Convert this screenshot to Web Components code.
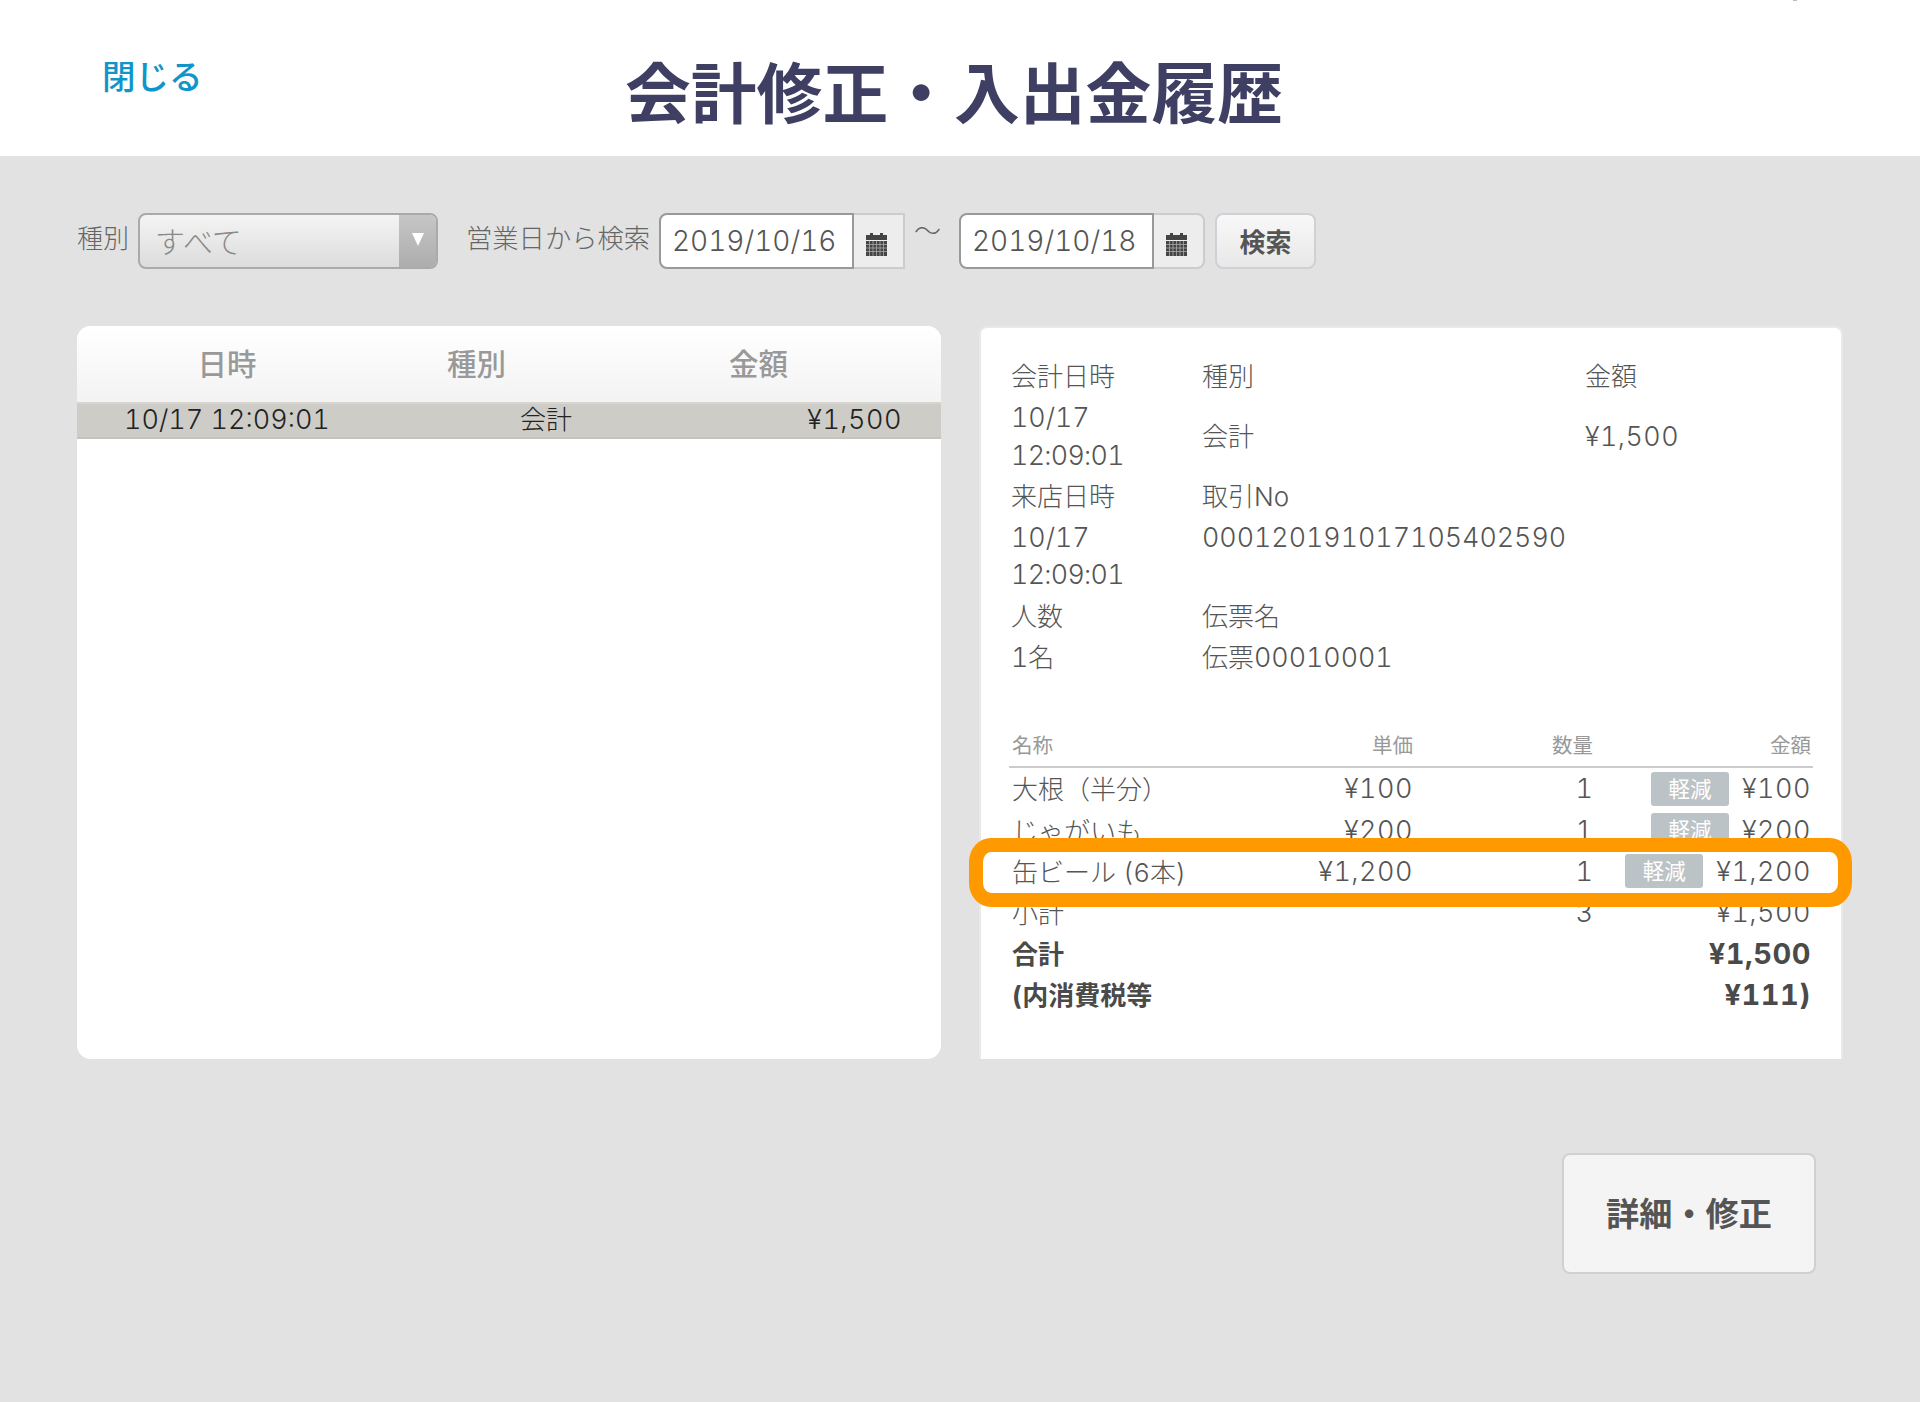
<!DOCTYPE html>
<html lang="ja"><head><meta charset="utf-8"><title>会計修正・入出金履歴</title>
<style>
html,body{margin:0;padding:0;background:#e2e2e2}
body{font-family:Inter,"Noto Sans CJK JP",sans-serif;font-weight:300;color:#555;font-size:26px;width:1920px;min-height:1402px}
</style></head><body>
<app-page></app-page>
<script>
const FONT='font-family:Inter,"Noto Sans CJK JP",sans-serif;font-variant-numeric:tabular-nums;';
function def(name,css,html){
  customElements.define(name,class extends HTMLElement{
    constructor(){super();const r=this.attachShadow({mode:'open'});
      r.innerHTML='<style>:host{'+FONT+'}'+css+'</style>'+(typeof html==='function'?html(this):html);}
  });
}
def('app-header',`
:host{display:grid;position:relative;grid-template-columns:1fr auto 1fr;height:157px;background:#fff;padding:0 114px 0 102px;box-sizing:border-box;border-bottom:1px solid #e4e4e4}
a{color:#0f95c9;font-size:33.5px;font-weight:500;margin-top:54px;line-height:46px;text-decoration:none;justify-self:start}
h1{margin:55px 0 0;font-size:65.8px;line-height:78px;font-weight:700;color:#3e3f63}
i{position:absolute;left:1793px;top:0;width:4px;height:1px;background:#bbb}
`,`<a href="#">閉じる</a><h1>会計修正・入出金履歴</h1><span></span><i></i>`);

def('select-box',`
:host{display:flex;width:300px;height:56px;box-sizing:border-box;border:2px solid #aaa;border-radius:8px;background:linear-gradient(#f4f4f4,#dcdcdc);overflow:hidden}
.v{flex:1;font-size:30px;line-height:54px;color:#8a8a8a;padding-left:15px}
.a{width:37px;background:linear-gradient(#c6c6c6,#adadad);display:flex;justify-content:center;padding-top:18px;box-sizing:border-box}
`,`<div class="v"><slot></slot></div><div class="a"><svg width="14" height="14" viewBox="0 0 14 14"><path d="M1 0H13L7 13Z" fill="#fff"/></svg></div>`);

def('cal-icon',`:host{display:block;width:21px;height:23px}`,
`<svg width="21" height="23" viewBox="0 0 21 23"><rect x="4" y="0" width="3" height="4" fill="#444"/><rect x="14" y="0" width="3" height="4" fill="#444"/><rect x="0" y="2" width="21" height="5" fill="#444"/><rect x="0" y="8" width="21" height="15" fill="#444"/><g stroke="#aaa" stroke-width=".8"><path d="M0 11.5H21M0 15H21M0 18.5H21M3.5 8V23M7 8V23M10.5 8V23M14 8V23M17.5 8V23"/></g></svg>`);

def('date-field',`
:host{display:flex;height:56px}
.i{width:195px;box-sizing:border-box;border:2px solid #999;border-radius:8px 0 0 8px;background:#fff;font-size:28px;line-height:52px;color:#555;padding-left:11px;white-space:nowrap}
.b{width:51px;box-sizing:border-box;background:#ededed;border:2px solid #ccc;border-left:0;display:flex;align-items:center;justify-content:center;padding:2px 4px 0 0}
:host([round]) .b{border-radius:0 8px 8px 0}
`,`<div class="i"><slot></slot></div><div class="b"><cal-icon></cal-icon></div>`);

def('soft-button',`
:host{display:flex;align-items:center;justify-content:center;box-sizing:border-box;border:2px solid #ced2d6;border-radius:8px;background:linear-gradient(#f8f8f8,#e8e8e8);color:#555;font-weight:700;font-size:26px;width:101px;height:56px;padding-bottom:2px}
:host([big]){width:254px;height:121px;background:#f4f4f4;font-size:33.2px;font-weight:700;border-color:#cdd1d5;padding-bottom:5px}
`,`<slot></slot>`);

def('filter-bar',`
:host{display:flex;align-items:center;height:56px;font-size:26px;color:#666;font-weight:300}
.l{line-height:56px;margin-top:-4px;white-space:nowrap}
`,`<span class="l" style="width:61px">種別</span><select-box>すべて</select-box>
<span class="l" style="margin-left:28px;width:193px;font-size:26.3px">営業日から検索</span><date-field>2019/10/16</date-field>
<span class="l" style="margin:-18px 0 0 9px;width:45px;font-size:27px">〜</span><date-field round>2019/10/18</date-field>
<soft-button style="margin-left:10px">検索</soft-button>`);

def('history-list',`
:host{display:block;width:864px;height:733px;background:#fff;border-radius:14px;overflow:hidden}
.h{display:grid;grid-template-columns:300px 199px 365px;height:76px;align-items:center;text-align:center;background:linear-gradient(#fff,#f3f3f3);color:#999;font-size:29.5px;font-weight:500}
.h span{margin-top:-5px}
.r{display:grid;grid-template-columns:302px 334px 228px;height:37px;box-sizing:border-box;background:#cdccc7;border-top:2px solid #d6d5d0;border-bottom:2px solid #c4c3be;align-items:center;color:#222;font-size:27px;line-height:31px}
.r span{margin-top:-2px}
.r span:nth-child(1){padding-left:47px;white-space:nowrap}.r span:nth-child(2){text-align:center;font-size:26px}.r span:nth-child(3){text-align:right;padding-right:39px;letter-spacing:.5px}
`,`<div class="h"><span>日時</span><span>種別</span><span>金額</span></div>
<div class="r"><span>10/17 12:09:01</span><span>会計</span><span>¥1,500</span></div>`);

def('info-grid',`
:host{display:grid;grid-template-columns:191px 383px 1fr;font-size:26px;color:#555;line-height:37.3px;align-items:center}
span{padding:2px 0}
b{font-weight:inherit;font-size:26.8px}
u{text-decoration:none;letter-spacing:-.7px}
s{text-decoration:none;letter-spacing:.5px}
`,`<span>会計日時</span><span>種別</span><span>金額</span>
<span><b>10/17<br><u>12:09:01</u></b></span><span>会計</span><span><b><s>¥1,500</s></b></span>
<span>来店日時</span><span>取引No</span><span></span>
<span><b>10/17<br><u>12:09:01</u></b></span><span style="align-self:start"><b>000120191017105402590</b></span><span></span>
<span>人数</span><span>伝票名</span><span></span>
<span><b>1</b>名</span><span>伝票<b>00010001</b></span><span></span>`);

const COLS='grid-template-columns:251px 150px 180px 1fr;padding:0 2px 0 3px;';
def('item-row',`
:host{display:grid;${COLS}height:41.2px;align-items:center;font-size:26px;color:#555;white-space:nowrap}
:host([bold]){font-weight:700;color:#4a4a4a}
.n{margin-top:-2px}
.p,.q,.a{text-align:right;font-size:27px}
.p,.a span:last-child{letter-spacing:.5px}
:host([bold]) .a{font-size:29px;margin-top:-1px}
.a{display:flex;justify-content:flex-end;align-items:center;gap:13px}
.b{background:#bcc3c6;color:#fff;border-radius:3px;width:78px;height:34px;line-height:34px;text-align:center;font-size:21.5px;font-weight:400}
:host(:not([tag])) .b{display:none}
`,el=>`<div class="n"><slot></slot></div><div class="p">${el.getAttribute('price')||''}</div><div class="q">${el.getAttribute('qty')||''}</div><div class="a"><span class="b">軽減</span><span>${el.getAttribute('amount')||''}</span></div>`);

customElements.define('item-table',class extends HTMLElement{
  constructor(){super();const r=this.attachShadow({mode:'open'});
  r.innerHTML=`<style>:host{display:block;${FONT}}
  .h{display:grid;${COLS}font-size:20.5px;color:#999;font-weight:400;height:39px;line-height:34px;box-sizing:border-box;border-bottom:2px solid #ccc}
  .h span+span{text-align:right}</style>
  <div class="h"><span>名称</span><span>単価</span><span>数量</span><span>金額</span></div><slot></slot>`;}
});

def('detail-panel',`
:host{display:block;position:relative;width:864px;height:733px;box-sizing:border-box;background:#fff;border:2px solid #e9e9e9;border-bottom:0;border-radius:8px 8px 0 0;padding:28px 28px 0 30px}
.t{display:block;margin:51px 0 0 -2px}
.hl{position:absolute;left:-12px;top:510px;width:883px;height:69px;box-sizing:border-box;border:14px solid #ff9900;border-radius:22px/24px}
`,`<info-grid></info-grid><item-table class="t"><slot></slot></item-table><div class="hl"></div>`);

def('app-page',`
:host{display:block}
main{padding:56px 77px 0 77px}
.p{display:flex;justify-content:space-between;margin-top:57px;width:1766px}
.f{display:flex;justify-content:flex-end;margin-top:94px;padding-right:27px}
`,`<app-header></app-header><main><filter-bar></filter-bar>
<div class="p"><history-list></history-list><detail-panel>
<item-row price="¥100" qty="1" amount="¥100" tag>大根（半分）</item-row>
<item-row price="¥200" qty="1" amount="¥200" tag>じゃがいも</item-row>
<item-row price="¥1,200" qty="1" amount="¥1,200" tag>缶ビール (6本)</item-row>
<item-row qty="3" amount="¥1,500">小計</item-row>
<item-row amount="¥1,500" bold>合計</item-row>
<item-row amount="¥111)" bold>(内消費税等</item-row>
</detail-panel></div>
<div class="f"><soft-button big>詳細・修正</soft-button></div></main>`);
</script></body></html>
